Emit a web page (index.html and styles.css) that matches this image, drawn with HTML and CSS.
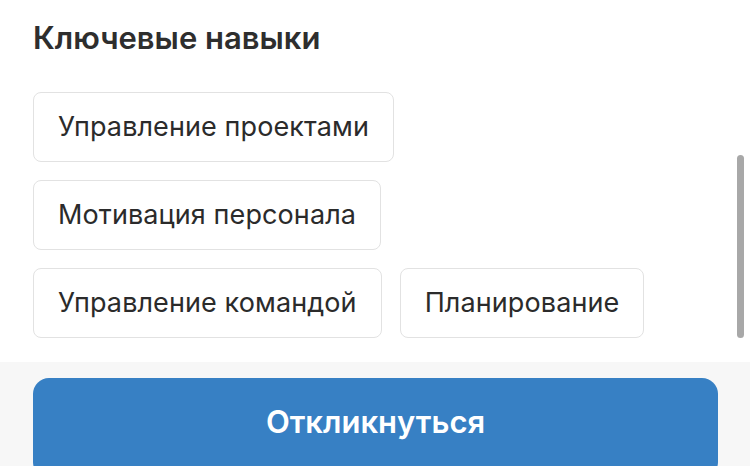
FILE: index.html
```html
<!DOCTYPE html>
<html lang="ru">
<head>
<meta charset="utf-8">
<link rel="stylesheet" href="styles.css">
</head>
<body>
<div class="page">
  <section class="content">
    <h2 class="title">Ключевые навыки</h2>
    <div class="chips">
      <span class="chip">Управление проектами</span>
      <span class="chip">Мотивация персонала</span>
      <span class="chip">Управление командой</span>
      <span class="chip">Планирование</span>
    </div>
  </section>
  <div class="scrollbar"></div>
  <footer class="footer">
    <button class="respond">Откликнуться</button>
  </footer>
</div>
</body>
</html>
```

FILE: styles.css
```css
html, body {
  margin: 0;
  padding: 0;
  background: #ffffff;
  overflow: hidden;
}
.page {
  position: relative;
  width: 750px;
  height: 466px;
  overflow: hidden;
  font-family: Inter, "Liberation Sans", Arial, sans-serif;
  color: #2c2c2c;
}
.content {
  padding: 18px 32px 24px 33px;
}
.title {
  margin: 0 0 34px 0;
  font-size: 31px;
  line-height: 40px;
  font-weight: 600;
  color: #2e2e2e;
}
.chips {
  display: flex;
  flex-wrap: wrap;
  gap: 18px;
}
.chip {
  display: inline-block;
  height: 68px;
  line-height: 68px;
  padding: 0 24px;
  border: 1px solid #e2e2e2;
  border-radius: 8px;
  font-size: 27px;
  letter-spacing: 0.1px;
  color: #2b2b2b;
  white-space: nowrap;
}
.scrollbar {
  position: absolute;
  left: 737px;
  top: 155px;
  width: 7px;
  height: 183px;
  border-radius: 4px;
  background: #a8a8a8;
}
.footer {
  background: #f7f7f7;
  padding: 16px 32px 0 33px;
  height: 120px;
}
.respond {
  display: block;
  width: 100%;
  height: 100px;
  border: none;
  border-radius: 16px;
  background: #3780c4;
  color: #ffffff;
  font-family: Inter, "Liberation Sans", Arial, sans-serif;
  font-size: 31px;
  font-weight: 600;
  padding: 0 0 14px 0;
  text-align: center;
}
```
